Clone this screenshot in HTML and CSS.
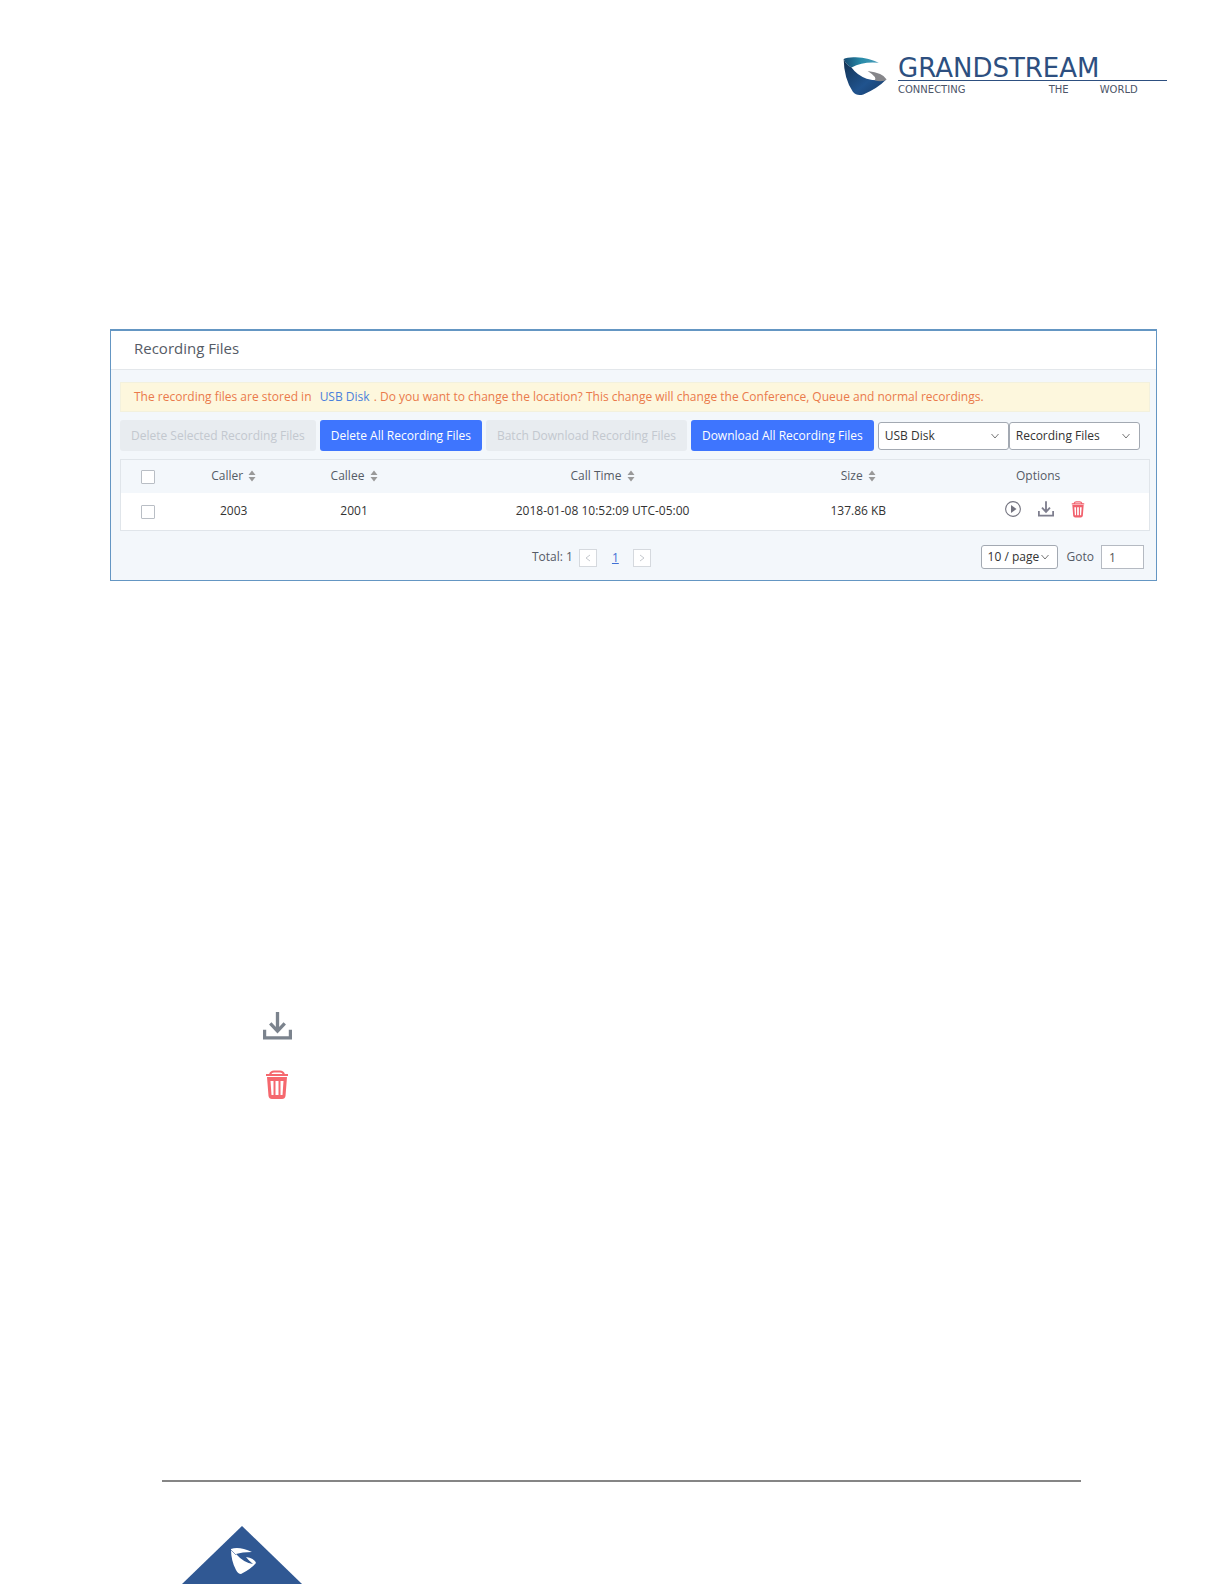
FILE: index.html
```html
<!DOCTYPE html>
<html lang="en">

<head>
    <meta charset="UTF-8">
    <meta name="viewport" content="width=device-width, initial-scale=1.0">
    <title>Recording Files</title>
    <link rel="stylesheet" href="styles.css">
</head>
<body>
    <!-- Shared icons -->
    <svg class="icon-defs" aria-hidden="true">
        <symbol id="icon-sort" viewBox="0 0 8 12">
            <path d="M4 0.5L7.5 5h-7z M4 11.5L7.5 7h-7z" fill="#999"/>
        </symbol>
        <symbol id="icon-play" viewBox="0 0 16 16">
            <circle cx="8" cy="8" r="7.4" fill="none" stroke="#73737f" stroke-width="1.1"/>
            <path d="M6 4v8L11.500 8z" fill="#73737f"/>
        </symbol>
        <symbol id="icon-download" viewBox="0 0 28 27">
            <path d="M1.500 17v8h25v-8" fill="none" stroke="currentColor" stroke-width="3.200"/>
            <path d="M14 0v18M7 11l7 7.500L21 11" fill="none" stroke="currentColor" stroke-width="3.200"/>
        </symbol>
        <symbol id="icon-trash" viewBox="0 0 24 30">
            <path d="M1 5h22M5 4.500Q6 1.500 9 1.500h6Q18 1.500 19 4.500" fill="none" stroke="currentColor" stroke-width="2"/>
            <path fill-rule="evenodd" d="M2 7h20L20.500 26Q20 29 17 29H7Q4 29 3.500 26z M5.500 11L6.500 25H8.500V11z M10.500 11V25h3V11z M15.500 11V25h2L18.500 11z" fill="currentColor"/>
        </symbol>
    </svg>

    <header class="page-header">
        <div class="brand">
            <svg class="brand-mark" viewBox="38 30 134 120" aria-hidden="true">
                <defs>
                    <linearGradient id="teal" x1="0" x2="1">
                        <stop offset="0" stop-color="#174a72"/>
                        <stop offset="0.5" stop-color="#288aa8"/>
                        <stop offset="1" stop-color="#4a9ebb"/>
                    </linearGradient>
                    <linearGradient id="navy" x1="0" x2="1" y1="0" y2="1">
                        <stop offset="0" stop-color="#12304f"/>
                        <stop offset="0.6" stop-color="#20538e"/>
                        <stop offset="1" stop-color="#183b66"/>
                    </linearGradient>
                </defs>
                <path d="M40 38Q52 32 76 33Q120 35 147 50Q100 45 64 64Q46 54 40 38z" fill="url(#teal)"/>
                <path d="M40 38Q46 54 64 64Q80 87 110 98Q132 105 168 102Q144 127 100 146Q80 152 68 138Q41 98 40 38z" fill="url(#navy)"/>
                <path d="M113 75Q160 80 171 101Q158 110 134 103Q144 95 113 75z" fill="#86868a"/>
            </svg>
            <div class="brand-text">
                <div class="brand-name">GRANDSTREAM</div>
                <div class="brand-tagline"><span>CONNECTING</span> <span>THE</span> <span>WORLD</span></div>
            </div>
        </div>
    </header>

    <main>
        <section class="panel">
            <h1>Recording Files</h1>

            <div class="panel-body">
                <p class="notice">The recording files are stored in <a href="#">USB Disk</a> . Do you want to change the location? This change will change the Conference, Queue and normal recordings.</p>

                <div class="toolbar">
                    <button type="button" disabled>Delete Selected Recording Files</button>
                    <button type="button">Delete All Recording Files</button>
                    <button type="button" disabled>Batch Download Recording Files</button>
                    <button type="button">Download All Recording Files</button>
                    <div class="filters">
                        <select aria-label="Storage">
                            <option>USB Disk</option>
                        </select>
                        <select aria-label="File type">
                            <option>Recording Files</option>
                        </select>
                    </div>
                </div>

                <table>
                    <thead>
                        <tr>
                            <th class="col-check"><input type="checkbox" aria-label="Select all"></th>
                            <th class="col-caller">Caller <svg class="sort"><use href="#icon-sort"/></svg></th>
                            <th class="col-callee">Callee <svg class="sort"><use href="#icon-sort"/></svg></th>
                            <th class="col-time">Call Time <svg class="sort"><use href="#icon-sort"/></svg></th>
                            <th class="col-size">Size <svg class="sort"><use href="#icon-sort"/></svg></th>
                            <th>Options</th>
                        </tr>
                    </thead>
                    <tbody>
                        <tr>
                            <td><input type="checkbox" aria-label="Select recording"></td>
                            <td>2003</td>
                            <td>2001</td>
                            <td>2018-01-08 10:52:09 UTC-05:00</td>
                            <td>137.86 KB</td>
                            <td>
                                <div class="actions">
                                    <button type="button" aria-label="Play"><svg class="play"><use href="#icon-play"/></svg></button>
                                    <button type="button" aria-label="Download"><svg class="download"><use href="#icon-download"/></svg></button>
                                    <button type="button" aria-label="Delete"><svg class="trash"><use href="#icon-trash"/></svg></button>
                                </div>
                            </td>
                        </tr>
                    </tbody>
                </table>

                <div class="pagination">
                    <span>Total: 1</span>
                    <button type="button" aria-label="Previous page" disabled><svg viewBox="0 0 6 8"><path d="M5 1L1 4l4 3"/></svg></button>
                    <a href="#">1</a>
                    <button type="button" aria-label="Next page" disabled><svg viewBox="0 0 6 8"><path d="M1 1l4 3-4 3"/></svg></button>
                    <div class="page-size">
                        <select aria-label="Rows per page">
                            <option>10 / page</option>
                        </select>
                        <label for="goto">Goto</label>
                        <input type="text" id="goto" value="1">
                    </div>
                </div>
            </div>
        </section>

        <div class="legend">
            <svg class="legend-download" role="img" aria-label="Download"><use href="#icon-download"/></svg>
            <svg class="legend-trash" role="img" aria-label="Delete"><use href="#icon-trash"/></svg>
        </div>
    </main>

    <footer>
        <svg class="footer-mark" viewBox="0 0 120 58" aria-hidden="true">
            <path d="M60 0L120 58H0z" fill="#305893"/>
            <path d="M49 23Q57 20 70 26Q60 26 54 28Q62 37 71 38Q66 34 64 31Q72 32 74 37Q69 43 59 48Q56 48 54 44Q49 35 49 23z" fill="#fff"/>
            <path d="M49 24L54 29" stroke="#305893" stroke-width="0.600"/>
        </svg>
    </footer>
</body>
</html>
```

FILE: styles.css
```css
* {
    box-sizing: border-box;
}

body {
    margin: 0;
    min-height: 100vh;
    display: flex;
    flex-direction: column;
    background-color: #fff;
    color: #555b66;
    font-family: "Open Sans", "Noto Sans", sans-serif;
    font-size: 12px;
    line-height: 16px;
}

button, input, select {
    font: inherit;
    margin: 0;
}

.icon-defs {
    display: none;
}

/* Header */
.page-header {
    display: flex;
    justify-content: flex-end;
    padding: 56px 57px 0 0;
}

.brand {
    display: flex;
    gap: 11px;
}

.brand-mark {
    width: 44px;
    height: 40px;
}

.brand-text {
    width: 269px;
    font-family: "DejaVu Sans", sans-serif;
    color: #2d4f80;
}

.brand-name {
    height: 25px;
    font-size: 26px;
    line-height: 24px;
    border-bottom: 1px solid #2d4f80;
}

.brand-tagline {
    display: grid;
    grid-template-columns: 56% 19% 25%;
    padding-top: 3px;
    font-size: 10px;
    line-height: 12px;
    color: #4c5568;
}

/* Recording files panel */
.panel {
    margin: 233px 67px 0 110px;
    border: 1px solid #6496c3;
    border-top-width: 2px;
    background-color: #f3f7fb;
}

.panel h1 {
    margin: 0;
    padding: 7px 23px 11px;
    font-size: 15px;
    font-weight: normal;
    line-height: 20px;
    background-color: #fff;
    border-bottom: 1px solid #e3e7eb;
}

.panel-body {
    padding: 12px 6px 11px 9px;
}

.notice {
    margin: 0 0 8px;
    padding: 6px 13px;
    background-color: #fdf7dd;
    border: 1px solid #f3f1dd;
    color: #ea7a4b;
}

.notice a {
    margin: 0 1px 0 5px;
    color: #4a80dc;
    text-decoration: none;
}

.toolbar {
    display: flex;
    align-items: center;
    gap: 4px;
    margin-bottom: 8px;
}

.toolbar button {
    height: 31px;
    padding: 0 11px;
    border: none;
    border-radius: 3px;
    background-color: #3e75fe;
    color: #fff;
    white-space: nowrap;
}

.toolbar button:disabled {
    background-color: #e8ecf0;
    color: #c3c8cf;
}

.filters {
    display: flex;
}

select {
    height: 28px;
    padding: 0 6px;
    border: 1px solid #a3a9b2;
    border-radius: 3px;
    appearance: none;
    color: #333;
    background: #fff url("data:image/svg+xml,%3Csvg xmlns='http://www.w3.org/2000/svg' width='8' height='6'%3E%3Cpath d='M.5 1L4 5l3.500-4' fill='none' stroke='%23777'/%3E%3C/svg%3E") no-repeat right 9px center;
}

.filters select {
    width: 131px;
}

/* Table */
table {
    width: 100%;
    border: 1px solid #e0e5ea;
    border-collapse: collapse;
    table-layout: fixed;
    text-align: center;
}

th, td {
    padding: 0;
    font-weight: normal;
}

th {
    height: 33px;
}

td {
    height: 38px;
    background-color: #fff;
    color: #333;
}

.col-check {
    width: 5.300%;
}

.col-caller {
    width: 11.400%;
}

.col-callee {
    width: 12%;
}

.col-time {
    width: 36.300%;
}

.col-size {
    width: 13.400%;
}

input[type="checkbox"] {
    display: block;
    width: 14px;
    height: 14px;
    margin: 2px auto 0;
    appearance: none;
    background-color: #fff;
    border: 1px solid #b9bec5;
    border-radius: 1px;
}

.sort {
    width: 8px;
    height: 12px;
    margin-left: 2px;
    vertical-align: -2px;
}

.actions {
    display: flex;
    justify-content: center;
    align-items: center;
    gap: 17px;
    padding: 0 0 4px 14px;
}

.actions button {
    display: flex;
    padding: 0;
    border: none;
    background: none;
}

.play {
    width: 16px;
    height: 16px;
}

.download {
    width: 16px;
    height: 16px;
    color: #7e7e8e;
}

.trash {
    width: 14px;
    height: 17px;
    color: #f1616d;
}

/* Pagination */
.pagination {
    display: flex;
    align-items: center;
    margin-top: 14px;
    padding: 0 6px 0 40%;
}

.pagination button {
    display: flex;
    align-items: center;
    justify-content: center;
    width: 18px;
    height: 18px;
    padding: 0;
    margin: 2px 0 0 6px;
    background-color: #fff;
    border: 1px solid #d5d9de;
}

.pagination button svg {
    width: 6px;
    height: 8px;
    fill: none;
    stroke: #c5c9ce;
}

.pagination a {
    margin: 2px 8px 0 15px;
    color: #3f70d5;
}

.page-size {
    display: flex;
    align-items: center;
    margin-left: auto;
}

.page-size select {
    width: 77px;
    height: 24px;
    background-position: right 8px center;
}

.page-size label {
    margin: 0 7px 0 9px;
}

.page-size input {
    width: 43px;
    height: 24px;
    padding: 0 7px;
    border: 1px solid #b5bac2;
    color: #555;
}

/* Icons under the panel */
.legend {
    display: flex;
    flex-direction: column;
    align-items: center;
    gap: 30px;
    width: 30px;
    margin: 431px 0 0 262px;
}

.legend-download {
    width: 29px;
    height: 28px;
    color: #7b838d;
}

.legend-trash {
    width: 24px;
    height: 30px;
    color: #f5686e;
}

/* Footer */
footer {
    margin: auto 143px 0 162px;
    padding: 44px 0 0 20px;
    border-top: 2px solid #858585;
}

.footer-mark {
    display: block;
    width: 120px;
    height: 58px;
}
```
